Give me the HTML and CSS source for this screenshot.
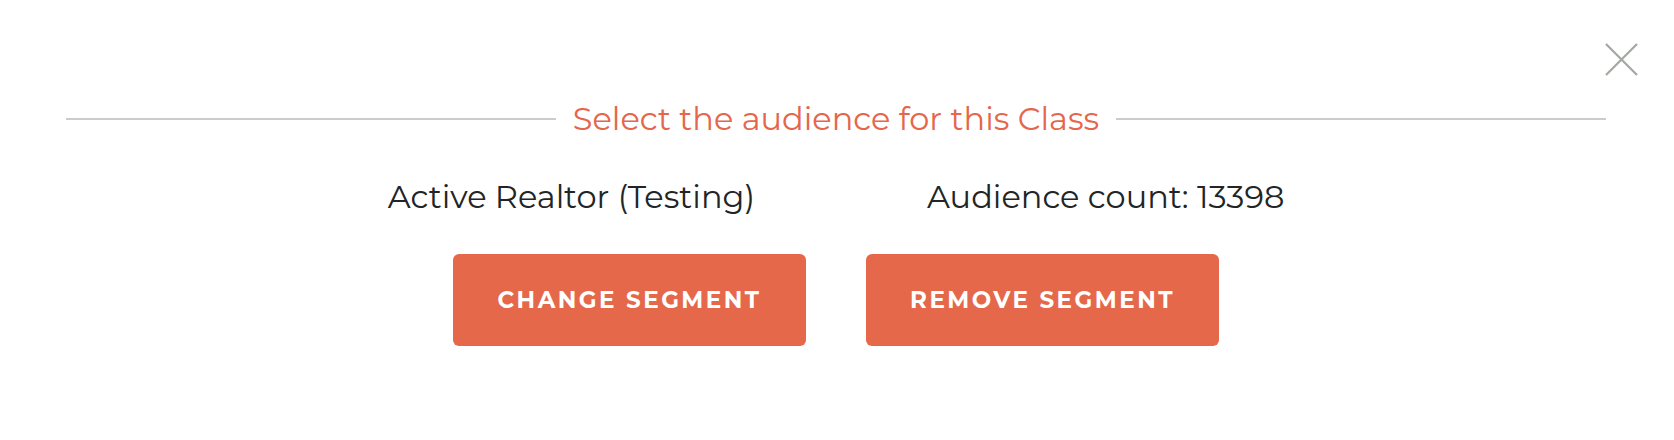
FILE: index.html
```html
<!DOCTYPE html>
<html lang="en">
<head>
<meta charset="utf-8">
<title>Select the audience</title>
<link rel="stylesheet" href="styles.css">
</head>
<body>
<div class="modal">
  <button class="close" aria-label="Close">
    <svg width="35" height="35" viewBox="0 0 35 35"><path d="M2 2 L33 33 M33 2 L2 33" stroke="#a3a8a1" stroke-width="2.2" fill="none"/></svg>
  </button>
  <div class="title-row">
    <span class="rule"></span>
    <h2 class="title">Select the audience for this Class</h2>
    <span class="rule"></span>
  </div>
  <div class="info">
    <span>Active Realtor (Testing)</span>
    <span>Audience count: 13398</span>
  </div>
  <div class="actions">
    <button class="btn">CHANGE SEGMENT</button>
    <button class="btn">REMOVE SEGMENT</button>
  </div>
</div>
</body>
</html>
```
FILE: styles.css
```css
html, body {
  margin: 0;
  padding: 0;
  background: #ffffff;
}
body {
  font-family: Montserrat, "DejaVu Sans", sans-serif;
  width: 1674px;
  height: 440px;
  overflow: hidden;
}
.modal {
  position: relative;
  padding: 102px 68px 0 66px;
}
.close {
  position: absolute;
  top: 42px;
  left: 1604px;
  width: 35px;
  height: 35px;
  padding: 0;
  border: 0;
  background: none;
}
.close svg {
  display: block;
}
.title-row {
  display: flex;
  align-items: center;
  gap: 17px;
  height: 34px;
}
.rule {
  flex: 1;
  height: 2px;
  background: #cccccc;
}
.title {
  margin: 0;
  font-weight: 400;
  font-size: 32px;
  line-height: 34px;
  color: #e5664a;
  white-space: nowrap;
}
.info {
  display: flex;
  justify-content: center;
  gap: 172px;
  margin-top: 42px;
  font-size: 32px;
  line-height: 38px;
  color: #222426;
}
.actions {
  display: flex;
  justify-content: center;
  gap: 60px;
  margin-top: 38px;
}
.btn {
  width: 353px;
  height: 92px;
  border: 0;
  border-radius: 6px;
  background: #e5684a;
  color: #ffffff;
  font-family: Montserrat, "DejaVu Sans", sans-serif;
  font-weight: 700;
  font-size: 23px;
  letter-spacing: 2.5px;
  padding: 0;
}
```
